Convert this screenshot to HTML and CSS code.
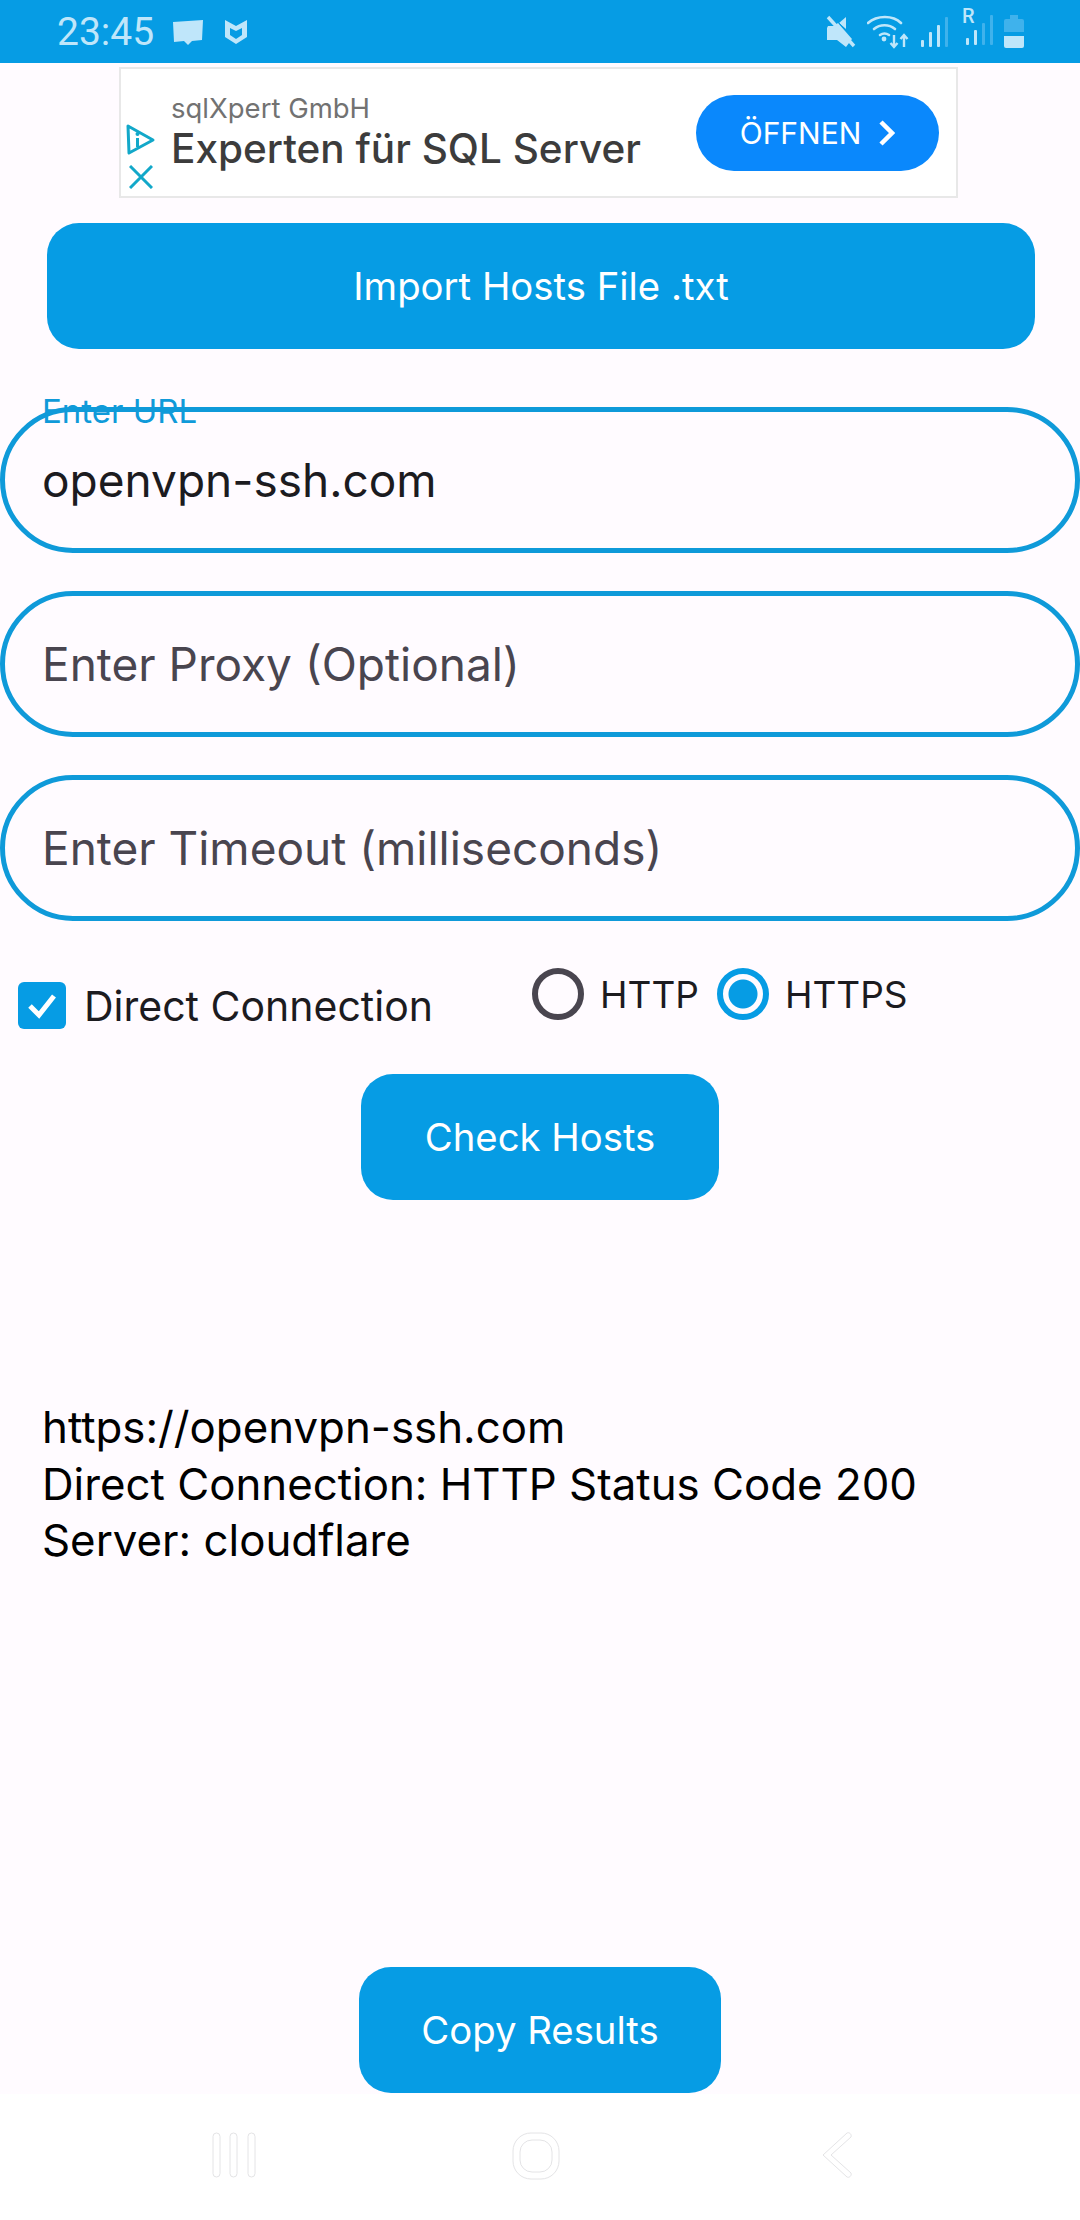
FILE: index.html
```html
<!DOCTYPE html>
<html lang="de">
<head>
    <meta charset="UTF-8">
    <meta name="viewport" content="width=device-width, initial-scale=1.0">
    <title>Host Checker</title>
    <link rel="stylesheet" href="styles.css">
</head>
<body>
    <div class="status-bar">
        <div class="status-left">
            <span class="clock">23:45</span>
            <svg class="icon-msg" width="32" height="26" viewBox="0 0 32 26"><path d="M1 3 31 1 l-1 20-10 1-4 4-4-4-10 1z" fill="#bfe6fa"/></svg>
            <svg class="icon-shield" width="24" height="26" viewBox="0 0 24 26"><path fill-rule="evenodd" d="M1 1l11 6 11-6v17l-11 7-11-7zM6 9v7l6 4 6-4V9l-6 3z" fill="#bfe6fa"/></svg>
        </div>
        <div class="status-right">
            <svg width="30" height="34" viewBox="0 0 30 34"><path d="M2 11h6l4-3 14 16v-0l-6 8-9-7H1v-12z" fill="#bfe6fa"/><path d="M20 2v12l-7-6z" fill="#bfe6fa"/><path d="M2 2l26 29" stroke="#bfe6fa" stroke-width="3.4" fill="none"/><path d="M2 2l26 29" stroke="#069ce4" stroke-width="1" fill="none" transform="translate(3 -3)"/></svg>
            <svg width="42" height="34" viewBox="0 0 42 34"><g fill="none" stroke="#bfe6fa" stroke-width="2.6" stroke-linecap="round"><path d="M1 8c9-8 25-8 33 0"/><path d="M7 14c6-5 15-5 21 0"/><path d="M13 20c3-2 6-2 9 0"/></g><circle cx="17" cy="24" r="2.4" fill="#bfe6fa"/><g fill="none" stroke="#bfe6fa" stroke-width="2.4"><path d="M27 20v12M23.5 28l3.5 4 3.5-4"/><path d="M37 32V20M33.500 24l3.500-4 3.500 4"/></g></svg>
            <svg width="28" height="32" viewBox="0 0 28 32"><rect x="1" y="24" width="3" height="7" rx="1" fill="#bfe6fa"/><rect x="9" y="16" width="3" height="15" rx="1" fill="#bfe6fa"/><rect x="17" y="9" width="3" height="22" rx="1" fill="#bfe6fa"/><rect x="25" y="1" width="3" height="30" rx="1" fill="#3fb2ec"/></svg>
            <div class="sim">
                <span class="roam">R</span>
                <svg width="28" height="32" viewBox="0 0 28 32"><rect x="1" y="24" width="3" height="7" rx="1" fill="#bfe6fa"/><rect x="9" y="16" width="3" height="15" rx="1" fill="#bfe6fa"/><rect x="17" y="9" width="3" height="22" rx="1" fill="#3fb2ec"/><rect x="25" y="1" width="3" height="30" rx="1" fill="#3fb2ec"/></svg>
            </div>
            <svg width="20" height="33" viewBox="0 0 20 33"><path d="M6 0h8v4h4a2 2 0 0 1 2 2v11H0V6a2 2 0 0 1 2-2h4z" fill="#3fb2ec"/><path d="M0 21h20v10a2 2 0 0 1-2 2H2a2 2 0 0 1-2-2z" fill="#bfe6fa"/></svg>
        </div>
    </div>

    <div class="main">
        <div class="ad">
            <div class="ad-marks">
                <svg width="30" height="32" viewBox="0 0 30 32"><path d="M2 2l25 14L3 29z" fill="none" stroke="#12a8c9" stroke-width="3" stroke-linejoin="round"/><rect x="10" y="14" width="3" height="9" fill="#12a8c9"/><circle cx="11.500" cy="10" r="2" fill="#12a8c9"/></svg>
                <svg width="24" height="24" viewBox="0 0 24 24"><path d="M1 1l22 22M23 1L1 23" fill="none" stroke="#12a8c9" stroke-width="3"/></svg>
            </div>
            <div class="ad-text">
                <div class="ad-company">sqlXpert GmbH</div>
                <div class="ad-title">Experten für SQL Server</div>
            </div>
            <div class="ad-button">
                <span>ÖFFNEN</span>
                <svg width="16" height="26" viewBox="0 0 16 26"><path d="M2 2l11 11L2 24" fill="none" stroke="#fff" stroke-width="4.500"/></svg>
            </div>
        </div>

        <div class="btn btn-import">Import Hosts File .txt</div>

        <div class="field field-first">
            <span class="field-label">Enter URL</span>
            <span class="field-value">openvpn-ssh.com</span>
        </div>
        <div class="field"><span class="field-hint">Enter Proxy (Optional)</span></div>
        <div class="field"><span class="field-hint">Enter Timeout (milliseconds)</span></div>

        <div class="options">
            <div class="check-row">
                <span class="checkbox">
                    <svg width="36" height="32" viewBox="0 0 36 32"><path d="M6 16l9 9L30 6" fill="none" stroke="#fff" stroke-width="5"/></svg>
                </span>
                <span class="option-text">Direct Connection</span>
            </div>
            <div class="radio-row">
                <span class="radio"></span>
                <span class="option-text">HTTP</span>
                <span class="radio radio-on"></span>
                <span class="option-text">HTTPS</span>
            </div>
        </div>

        <div class="btn btn-check">Check Hosts</div>

        <div class="results">
            https://openvpn-ssh.com<br>
            Direct Connection: HTTP Status Code 200<br>
            Server: cloudflare
        </div>

        <div class="btn btn-copy">Copy Results</div>
    </div>

    <div class="nav-bar">
        <svg width="44" height="46" viewBox="0 0 44 46"><g fill="none" stroke="#e4e4e6" stroke-width="1"><rect x="1" y="1" width="7" height="44" rx="3.500"/><rect x="18" y="1" width="7" height="44" rx="3.500"/><rect x="36" y="1" width="7" height="44" rx="3.500"/></g></svg>
        <svg width="48" height="48" viewBox="0 0 48 48"><g fill="none" stroke="#e4e4e6" stroke-width="1"><rect x="1" y="1" width="46" height="46" rx="18"/><rect x="8" y="8" width="32" height="32" rx="12"/></g></svg>
        <svg width="30" height="46" viewBox="0 0 30 46"><path d="M25 1 1 23l24 22c2 1 5-1 4-4L9 23 29 5c1-3-2-5-4-4z" fill="none" stroke="#e4e4e6" stroke-width="1"/></svg>
    </div>
</body>
</html>
```

FILE: styles.css
```css
* {
    box-sizing: border-box;
}
body {
    margin: 0;
    width: 1080px;
    height: 2220px;
    overflow: hidden;
    background-color: #fff;
    font-family: Inter, "Noto Sans", sans-serif;
    color: #1c1b1f;
}
.status-bar {
    height: 63px;
    background-color: #069ce4;
    display: flex;
    justify-content: space-between;
    align-items: center;
    padding: 0 56px 0 57px;
    color: #bfe6fa;
}
.status-left {
    display: flex;
    align-items: center;
}
.clock {
    font-family: Roboto, sans-serif;
    font-size: 39px;
    width: 115px;
}
.icon-shield {
    margin-left: 20px;
}
.status-right {
    display: flex;
    align-items: center;
    gap: 11px;
}
.sim {
    position: relative;
    margin-left: 6px;
}
.roam {
    position: absolute;
    left: -3px;
    top: -10px;
    font-family: Roboto, sans-serif;
    font-size: 20px;
    font-weight: 500;
}
.main {
    height: 2031px;
    background-color: #fffbff;
    padding-top: 4px;
    display: flex;
    flex-direction: column;
    align-items: center;
}
.ad {
    width: 839px;
    height: 131px;
    background-color: #fff;
    border: 2px solid #e8e8e8;
    display: flex;
    align-items: center;
    padding: 0 17px 0 4px;
    margin-right: 3px;
}
.ad-marks {
    display: flex;
    flex-direction: column;
    align-items: center;
    gap: 9px;
    margin-top: 48px;
    width: 32px;
}
.ad-text {
    flex: 1;
    margin-left: 14px;
    margin-top: -4px;
}
.ad-company {
    font-size: 27.500px;
    line-height: 36px;
    color: #727272;
}
.ad-title {
    font-size: 40.500px;
    line-height: 46px;
    color: #3c3c3c;
    font-weight: 500;
}
.ad-button {
    width: 243px;
    height: 76px;
    border-radius: 38px;
    background-color: #0a88fc;
    color: #fff;
    font-size: 30px;
    display: flex;
    align-items: center;
    justify-content: center;
    gap: 18px;
}
.btn {
    height: 126px;
    border-radius: 32px;
    background-color: #069ce4;
    color: #fff;
    font-size: 38.300px;
    display: flex;
    align-items: center;
    justify-content: center;
}
.btn-import {
    width: 988px;
    margin-top: 25px;
    margin-bottom: 58px;
    margin-left: 2px;
}
.field {
    position: relative;
    width: 1080px;
    height: 146px;
    border: 5px solid #0f9ad9;
    border-radius: 73px;
    padding-left: 37px;
    margin-bottom: 38px;
    display: flex;
    align-items: center;
    font-size: 46px;
    background-color: #fffbff;
}
.field-label {
    position: absolute;
    left: 37px;
    top: -21px;
    font-size: 33px;
    color: #0f9ad9;
}
.field-value {
    color: #1c1b1f;
}
.field-hint {
    color: #49454f;
}
.options {
    width: 100%;
    height: 153px;
    margin-top: -38px;
    display: flex;
    padding-left: 18px;
}
.check-row {
    display: flex;
    align-items: center;
    height: 47px;
    margin-top: 61px;
    width: 514px;
}
.checkbox {
    width: 48px;
    height: 47px;
    border-radius: 6px;
    background-color: #069ce4;
    display: flex;
    align-items: center;
    justify-content: center;
}
.option-text {
    font-size: 37px;
    color: #1c1b1f;
}
.check-row .option-text {
    font-size: 41px;
    margin-left: 18px;
}
.radio-row {
    display: flex;
    align-items: center;
    height: 52px;
    margin-top: 47px;
}
.radio {
    width: 52px;
    height: 52px;
    border-radius: 50%;
    border: 6px solid #49454f;
    margin-right: 16px;
}
.radio-on {
    border-color: #069ce4;
    margin-left: 18px;
    background: radial-gradient(circle, #069ce4 0, #069ce4 14px, transparent 15px);
}
.btn-check {
    width: 358px;
}
.results {
    width: 100%;
    padding-left: 42px;
    margin-top: 200px;
    font-size: 43.800px;
    line-height: 56.500px;
    color: #000;
    flex: 1;
}
.btn-copy {
    width: 362px;
    margin-bottom: 1px;
}
.nav-bar {
    height: 126px;
    background-color: #fff;
    display: flex;
    align-items: flex-start;
    padding: 38px 0 0 212px;
}
.nav-bar svg:nth-child(2) {
    margin-left: 256px;
}
.nav-bar svg:nth-child(3) {
    margin-left: 262px;
}
```
